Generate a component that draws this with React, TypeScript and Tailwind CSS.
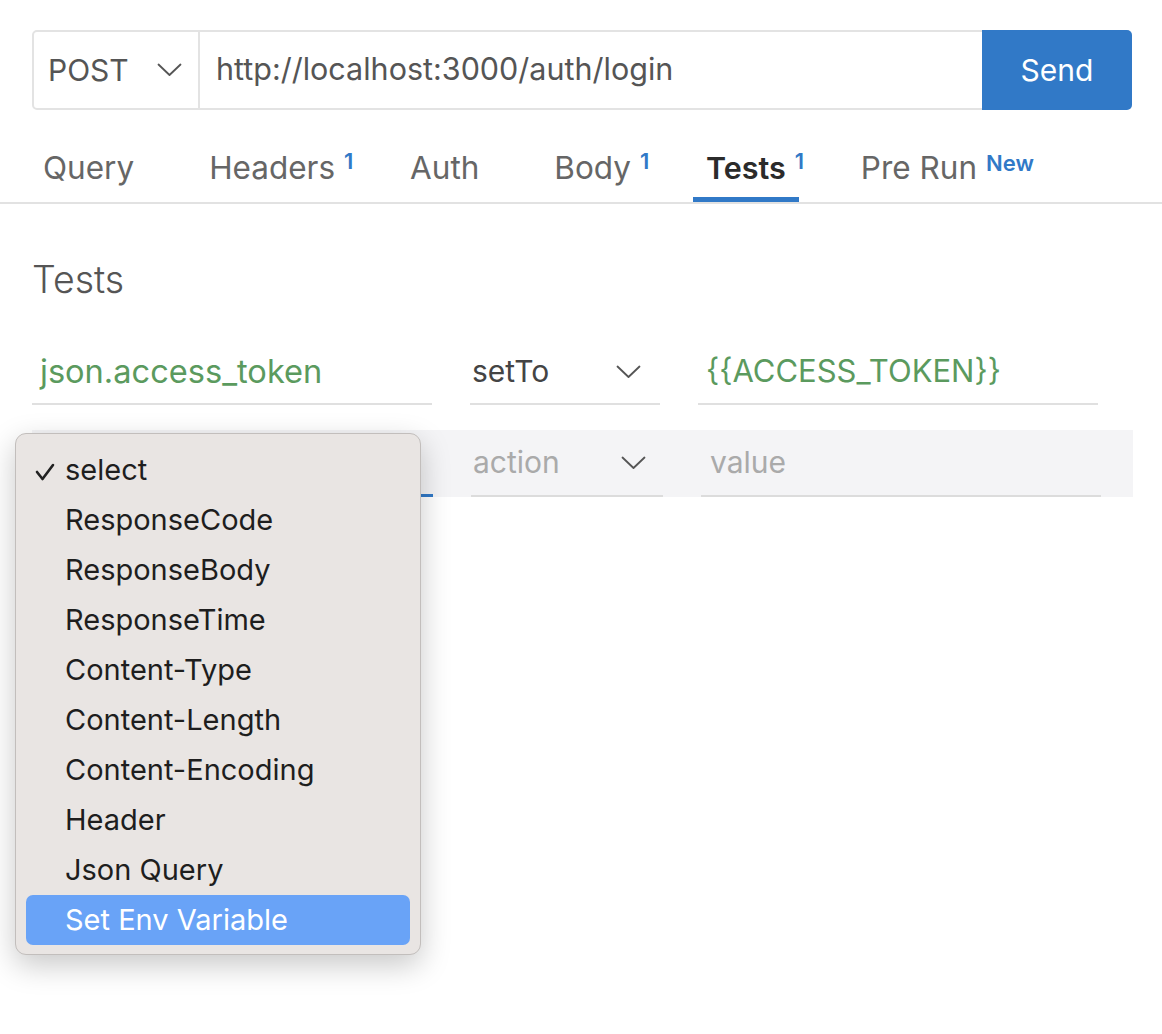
import React from "react";

const Chevron = ({ className = "" }: { className?: string }) => (
  <svg className={className} width="25" height="14" viewBox="0 0 25 14" fill="none">
    <polyline points="1.5,1.5 12.5,12 23.5,1.5" stroke="#555" strokeWidth="1.8" strokeLinecap="round" strokeLinejoin="round" />
  </svg>
);

const tabs = [
  { label: "Query" },
  { label: "Headers", sup: "1" },
  { label: "Auth" },
  { label: "Body", sup: "1" },
  { label: "Tests", sup: "1", active: true },
  { label: "Pre Run", sup: "New" },
];

const options = [
  "select",
  "ResponseCode",
  "ResponseBody",
  "ResponseTime",
  "Content-Type",
  "Content-Length",
  "Content-Encoding",
  "Header",
  "Json Query",
  "Set Env Variable",
];

export default function App() {
  return (
    <div className="relative w-[1162px] h-[1034px] bg-white font-['Inter',sans-serif] overflow-hidden">
      {/* URL bar */}
      <div className="pt-[30px] px-[32px]">
        <div className="flex h-[80px] w-[1100px]">
          <div className="flex items-center justify-between w-[168px] border-2 border-[#e3e3e3] rounded-l-[5px] pl-[14px] pr-[16px] text-[30px] text-[#555]">
            <span>POST</span>
            <Chevron />
          </div>
          <div className="flex items-center flex-1 border-y-2 border-[#e3e3e3] pl-[16px] text-[30.5px] text-[#555] pb-[3px]">
            http://localhost:3000/auth/login
          </div>
          <div className="flex items-center justify-center w-[150px] bg-[#3179c7] rounded-r-[5px] text-white text-[30px]">
            Send
          </div>
        </div>
      </div>

      {/* Tabs */}
      <div className="mt-[24px] flex gap-[49px] pl-[30px] border-b-2 border-[#e2e2e2]">
        {tabs.map((t) => (
          <div key={t.label} className="relative flex items-center h-[68px] px-[13px]">
            <span className={t.active ? "text-[30.5px] font-semibold text-[#2b2b2b]" : "text-[31.5px] text-[#666]"}>
              {t.label}
            </span>
            {t.sup && (
              <span
                className={
                  t.sup === "New"
                    ? "absolute left-[calc(100%-4px)] top-[13px] text-[22px] font-semibold text-[#3179c7]"
                    : "absolute left-[calc(100%-4px)] top-[11px] text-[22px] font-semibold text-[#3179c7]"
                }
              >
                {t.sup}
              </span>
            )}
            {t.active && <div className="absolute left-0 right-0 bottom-0 h-[5px] bg-[#3179c7]" />}
          </div>
        ))}
      </div>

      {/* Tests section */}
      <div className="px-[32px]">
        <div className="mt-[54px] text-[37.5px] leading-[44px] font-light text-[#555]">Tests</div>

        {/* Row 1 */}
        <div className="mt-[38px] flex gap-[38px] w-[1101px]">
          <div className="flex items-center h-[65px] w-[400px] border-b-2 border-[#e0e0e0] pl-[8px] text-[32.6px] text-[#5b9a5e]">
            json.access_token
          </div>
          <div className="flex items-center justify-between h-[65px] w-[190px] border-b-2 border-[#e0e0e0] pl-[2px] pr-[19px] text-[30px] text-[#444]">
            <span>setTo</span>
            <Chevron />
          </div>
          <div className="flex items-center h-[65px] w-[400px] border-b-2 border-[#e0e0e0] pl-[8px] text-[31px] text-[#5b9a5e]">
            {"{{ACCESS_TOKEN}}"}
          </div>
        </div>

        {/* Row 2 */}
        <div className="mt-[25px] flex gap-[38px] w-[1101px] h-[67px] bg-[#f4f4f6]">
          <div className="h-full w-[401px] border-b-[3px] border-[#3179c7]" />
          <div className="flex items-center justify-between h-full w-[192px] border-b-2 border-[#dcdcdc] pl-[2px] pr-[17px] text-[30px] text-[#aaa]">
            <span>action</span>
            <Chevron />
          </div>
          <div className="flex items-center h-full w-[400px] border-b-2 border-[#dcdcdc] pl-[9px] text-[30px] text-[#aaa]">
            value
          </div>
        </div>
      </div>

      {/* Dropdown menu */}
      <div className="absolute left-[15px] top-[433px] w-[406px] h-[522px] bg-[#e9e5e3] border border-[#c2bebc] rounded-[11px] shadow-[0_10px_30px_rgba(0,0,0,0.22)] pt-[11px] px-[10px]">
        {options.map((o, i) => {
          const hl = i === options.length - 1;
          return (
            <div
              key={o}
              className={
                "relative flex items-center h-[50px] pl-[39px] text-[29px] rounded-[7px] " +
                (hl ? "bg-[#69a3f7] text-white" : "text-[#1e1e1e]")
              }
            >
              {i === 0 && (
                <svg className="absolute left-[9px] top-[18px]" width="20" height="18" viewBox="0 0 20 18" fill="none">
                  <polyline points="2,9 7.5,16 18,2" stroke="#222" strokeWidth="2.6" strokeLinecap="round" strokeLinejoin="round" />
                </svg>
              )}
              <span className="pb-[1px]">{o}</span>
            </div>
          );
        })}
      </div>
    </div>
  );
}
